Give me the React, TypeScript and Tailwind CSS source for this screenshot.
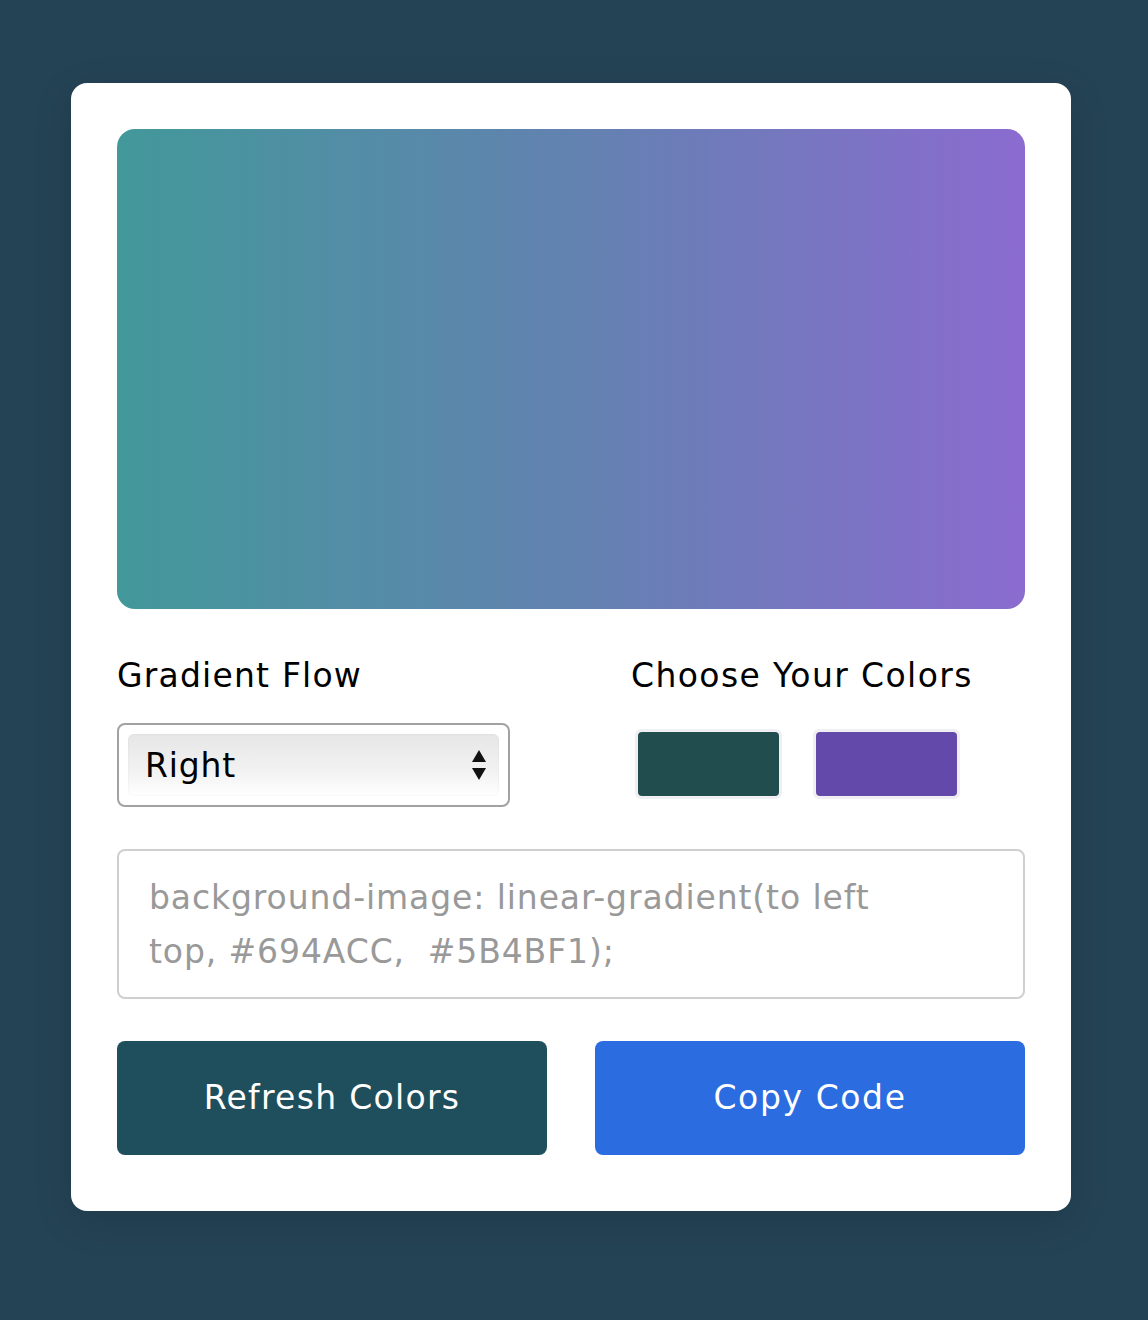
export default function App() {
  const font = { fontFamily: '"DejaVu Sans", "Liberation Sans", sans-serif' };

  return (
    <div className="min-h-[1320px] w-full bg-[#244355] pl-[71px] pt-[83px]" style={font}>
      <div className="w-[1000px] rounded-2xl bg-white px-[46px] pb-[56px] pt-[46px] shadow-[0_10px_40px_rgba(0,0,0,0.12)]">
        <div className="h-[480px] w-full rounded-[18px] bg-[linear-gradient(to_right,#42989a,#6282b0_50%,#8b6bd0)]" />

        <div className="mt-[47px] flex">
          <div className="w-[514px]">
            <h2 className="text-[33px] leading-[40px] tracking-[1.2px] text-black">Gradient Flow</h2>
            <div className="mt-[27px] w-[393px] rounded-lg border-2 border-[#a2a2a2] p-[9px]">
              <div className="flex h-[62px] items-center justify-between rounded-md bg-[linear-gradient(to_bottom,#e6e6e6,#f2f2f2_60%,#ffffff)] pl-[17px] pr-[12px] shadow-[inset_0_0_2px_rgba(0,0,0,0.08)]">
                <span className="text-[33px] leading-none tracking-[0.8px] text-black">Right</span>
                <svg width="16" height="32" viewBox="0 0 16 32">
                  <path d="M8 1 L15 13 L1 13 Z" fill="#111" />
                  <path d="M1 19 L15 19 L8 31 Z" fill="#111" />
                </svg>
              </div>
            </div>
          </div>
          <div>
            <h2 className="text-[33px] leading-[40px] tracking-[1.4px] text-black">Choose Your Colors</h2>
            <div className="mt-[33px] flex gap-[31px] pl-[4px]">
              <div className="rounded-md border-[3px] border-[#f0f0f4] bg-white">
                <div className="h-[64px] w-[141px] rounded bg-[#224d4f]" />
              </div>
              <div className="rounded-md border-[3px] border-[#f0f0f4] bg-white">
                <div className="h-[64px] w-[141px] rounded bg-[#6349aa]" />
              </div>
            </div>
          </div>
        </div>

        <div className="mt-[42px] h-[150px] w-full rounded-lg border-2 border-[#cfcfcf] px-[30px] pt-[20px] text-[33px] leading-[54px] tracking-[0.9px] text-[#999999]">
          background-image: linear-gradient(to left
          <br />
          top, #694ACC,&nbsp; #5B4BF1);
        </div>

        <div className="mt-[42px] flex gap-[48px]">
          <button className="h-[114px] w-[430px] rounded-lg bg-[#1f4f5c] text-[33px] tracking-[1.3px] text-white">
            Refresh Colors
          </button>
          <button className="h-[114px] w-[430px] rounded-lg bg-[#2b6ce0] text-[33px] tracking-[1.6px] text-white">
            Copy Code
          </button>
        </div>
      </div>
    </div>
  );
}
